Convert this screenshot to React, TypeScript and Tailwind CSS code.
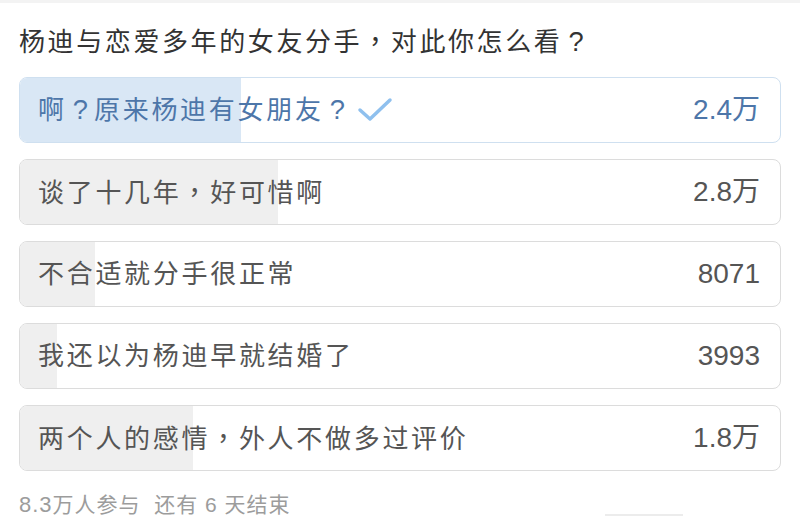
import React from "react";

type Part = string | { p: string };
type Opt = { parts: Part[]; count: string; fill: number; selected: boolean };

const options: Opt[] = [
  { parts: ["啊", { p: "?" }, "原来杨迪有女朋友", { p: "?" }], count: "2.4万", fill: 221, selected: true },
  { parts: ["谈了十几年", { p: "，" }, "好可惜啊"], count: "2.8万", fill: 258, selected: false },
  { parts: ["不合适就分手很正常"], count: "8071", fill: 75, selected: false },
  { parts: ["我还以为杨迪早就结婚了"], count: "3993", fill: 37, selected: false },
  { parts: ["两个人的感情", { p: "，" }, "外人不做多过评价"], count: "1.8万", fill: 173, selected: false },
];

const font = { fontFamily: '"Liberation Sans", "Noto Sans CJK SC", sans-serif' };
const comma = { fontFamily: '"Noto Sans CJK TC", sans-serif' };
const qmark = { fontFamily: '"Liberation Sans", sans-serif' };

function Parts({ parts }: { parts: Part[] }) {
  return (
    <span>
      {parts.map((x, i) =>
        typeof x === "string" ? (
          <span key={i}>{x}</span>
        ) : x.p === "?" ? (
          <span key={i} style={qmark} className="inline-block w-[1em] text-center text-[1.05em] tracking-normal">
            ?
          </span>
        ) : (
          <span key={i} style={comma}>
            {x.p}
          </span>
        )
      )}
    </span>
  );
}

function Check() {
  return (
    <svg width="36" height="28" viewBox="0 0 36 28" className="ml-[6px]">
      <path d="M3 14 L13 23 L33 4" fill="none" stroke="#8fc0ee" strokeWidth="3.5" strokeLinecap="round" strokeLinejoin="round" />
    </svg>
  );
}

export default function App() {
  return (
    <div className="w-[800px] h-[529px] bg-white overflow-hidden relative" style={font}>
      <div className="h-[3px] bg-[#f3f3f3]" />
      <div className="px-[19px]">
        <div className="h-[74px] pt-[3px] flex items-center text-[26px] tracking-[2.6px] text-[#333333]">
          <Parts parts={["杨迪与恋爱多年的女友分手", { p: "，" }, "对此你怎么看", { p: "?" }]} />
        </div>
        <div className="flex flex-col gap-[16px]">
          {options.map((o, i) => (
            <div
              key={i}
              className={
                o.selected
                  ? "relative h-[66px] rounded-[8px] border border-[#cfe0f0] overflow-hidden bg-white"
                  : "relative h-[66px] rounded-[8px] border border-[#dcdcdc] overflow-hidden bg-white"
              }
            >
              <div
                className={o.selected ? "absolute inset-y-0 left-0 bg-[#d9e7f5]" : "absolute inset-y-0 left-0 bg-[#efefef]"}
                style={{ width: o.fill }}
              />
              <div
                className={
                  o.selected
                    ? "relative h-full flex items-center justify-between pl-[18px] pr-[20px] text-[#4d76a9]"
                    : "relative h-full flex items-center justify-between pl-[18px] pr-[20px] text-[#555555]"
                }
              >
                <div className="flex items-center text-[26px] tracking-[2.7px]">
                  <Parts parts={o.parts} />
                  {o.selected && <Check />}
                </div>
                <span className="text-[28px]">{o.count}</span>
              </div>
            </div>
          ))}
        </div>
        <div className="mt-[17px] text-[21px] tracking-[1px] text-[#9c9c9c] whitespace-pre">
          <span className="text-[22px]">8.3</span>万人参与  还有 6 天结束
        </div>
      </div>
      <div className="absolute left-[605px] top-[514px] w-[78px] h-[2px] bg-[#ececec]" />
    </div>
  );
}
